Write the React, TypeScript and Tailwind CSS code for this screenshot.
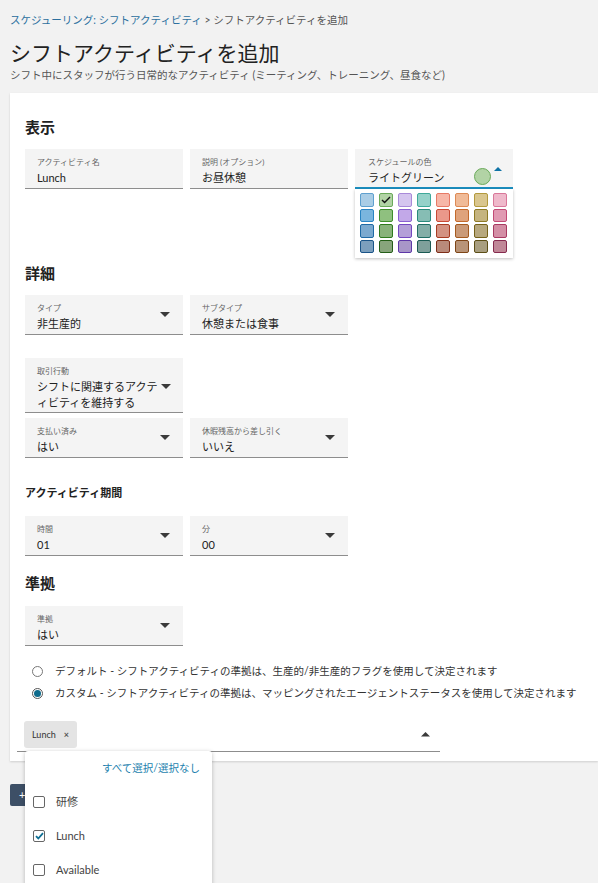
import React from 'react'

const swatches = [
  [
    ['#aacde6', '#5fa0cf'], ['#b2d3a5', '#6aaa5a'], ['#d5c5ef', '#a98ad9'], ['#95d2c9', '#3fa99a'],
    ['#f7b7a8', '#e87a66'], ['#f0bb98', '#dd8a55'], ['#d9c68e', '#b39a3e'], ['#efb9cb', '#d9789a'],
  ],
  [
    ['#7ab5de', '#2a84c3'], ['#8fc07f', '#3e8e2a'], ['#c2a8e8', '#8a5fd0'], ['#86bdb4', '#2a8a7c'],
    ['#ea988a', '#c84a35'], ['#dfa37c', '#c36a2c'], ['#c5b47f', '#8e7a25'], ['#e09ab2', '#c24b76'],
  ],
  [
    ['#7ba9cf', '#1f6aa5'], ['#88b27a', '#2e7a1e'], ['#b49fd8', '#7448c0'], ['#83aea7', '#206e65'],
    ['#d39282', '#a83b22'], ['#ca9a78', '#a55a1f'], ['#b7a87e', '#76621a'], ['#d38ea5', '#a83a62'],
  ],
  [
    ['#7c9fbd', '#1a5488'], ['#88a57c', '#245e18'], ['#a896c8', '#5e38a8'], ['#7fa09b', '#1a5a53'],
    ['#b98a7b', '#7e2e18'], ['#b89478', '#7e4516'], ['#a89e80', '#5c4e16'], ['#c08898', '#862b4f'],
  ],
]

function CaretDown() {
  return (
    <svg width="10" height="5" viewBox="0 0 10 5">
      <path d="M0 0h10L5 5z" fill="#3a3a3a" />
    </svg>
  )
}

function CaretUp({ color = '#3a3a3a', w = 9 }: { color?: string; w?: number }) {
  return (
    <svg width={w} height={w / 2} viewBox="0 0 10 5">
      <path d="M0 5h10L5 0z" fill={color} />
    </svg>
  )
}

function Field({
  label,
  value,
  caret = false,
  tall = false,
}: {
  label: string
  value: React.ReactNode
  caret?: boolean
  tall?: boolean
}) {
  return (
    <div
      className={`flex w-[158px] ${tall ? 'h-[55px] items-start' : 'h-[40px] items-center'} bg-[#f4f4f4] border-b border-[#8d8d8d] pl-[12px] pr-[13px]`}
    >
      <div className={`flex-1 self-start ${tall ? 'pt-[8px]' : 'pt-[8px]'}`}>
        <div className="text-[8px] leading-[10px] text-[#666]">{label}</div>
        <div className={`mt-[3px] text-[11px] leading-[16px] text-[#222] ${tall ? 'w-[124px]' : ''}`}>{value}</div>
      </div>
      {caret && (
        <div className={tall ? 'mt-[26px]' : ''}>
          <CaretDown />
        </div>
      )}
    </div>
  )
}

function ColorField() {
  return (
    <div className="relative">
      <div className="flex w-[158px] h-[40px] bg-[#f4f4f4] border-b-2 border-[#1c8fc0] pl-[13px]">
        <div className="flex-1 pt-[8px]">
          <div className="text-[8px] leading-[10px] text-[#666]">スケジュールの色</div>
          <div className="mt-[3px] text-[11px] leading-[16px] text-[#222]">ライトグリーン</div>
        </div>
        <div className="mt-[19px] w-[17px] h-[17px] rounded-full bg-[#b2d3a5] border border-[#6aaa5a]" />
        <div className="mt-[18px] ml-[3px] mr-[11px]">
          <CaretUp color="#0f73a6" w={8} />
        </div>
      </div>
      <div className="absolute left-0 top-full z-10 w-[158px] bg-white pt-[4px] pb-[5px] pl-[5px] shadow-[0_1px_3px_rgba(0,0,0,0.25)]">
        <div className="grid grid-cols-[repeat(8,14px)] gap-x-[5px] gap-y-[2px]">
          {swatches.flat().map(([fill, border], i) => (
            <div
              key={i}
              className="w-[14px] h-[13.5px] rounded-[2px] border-[1.5px] flex items-center justify-center"
              style={{ backgroundColor: fill, borderColor: border }}
            >
              {i === 1 && (
                <svg width="10" height="8" viewBox="0 0 10 8">
                  <path d="M1 4l2.6 2.6L9 1" stroke="#111" strokeWidth="1.4" fill="none" />
                </svg>
              )}
            </div>
          ))}
        </div>
      </div>
    </div>
  )
}

function Radio({ checked, children }: { checked?: boolean; children: React.ReactNode }) {
  return (
    <div className="flex items-center ml-[7px] h-[16px]">
      <div
        className={`w-[11px] h-[11px] rounded-full border ${checked ? 'border-[#555]' : 'border-[#777]'} bg-white flex items-center justify-center`}
      >
        {checked && <div className="w-[7px] h-[7px] rounded-full bg-[#0e6b8c]" />}
      </div>
      <span className="ml-[12px] text-[10.5px] leading-[16px] text-[#333]">{children}</span>
    </div>
  )
}

function Check({ checked }: { checked?: boolean }) {
  return (
    <div className="w-[12px] h-[12px] rounded-[2px] border border-[#666] bg-white flex items-center justify-center">
      {checked && (
        <svg width="9" height="8" viewBox="0 0 9 8">
          <path d="M1 4.2l2.3 2.3L8 1.2" stroke="#0f6f94" strokeWidth="1.8" fill="none" />
        </svg>
      )}
    </div>
  )
}

export default function App() {
  return (
    <div className="relative h-[883px] overflow-hidden bg-[#f2f2f2] pl-[10px] pt-[13px] font-[Lato,'Noto_Sans_CJK_JP',sans-serif]">
      <div className="text-[10.5px] leading-[14px]">
        <span className="text-[#2b6f9e]">スケジューリング: シフトアクティビティ</span>
        <span className="text-[#555]"> &gt; シフトアクティビティを追加</span>
      </div>
      <h1 className="mt-[12px] text-[21px] leading-[28px] text-[#222]">シフトアクティビティを追加</h1>
      <div className="text-[10.5px] leading-[16px] text-[#555]">
        シフト中にスタッフが行う日常的なアクティビティ (ミーティング、トレーニング、昼食など)
      </div>

      <div className="mt-[10px] bg-white pl-[15px] pt-[24px] pb-[9px] shadow-[0_1px_2px_rgba(0,0,0,0.15)]">
        <h2 className="text-[15px] leading-[20px] font-bold text-[#222]">表示</h2>
        <div className="mt-[12px] flex gap-[7px]">
          <Field label="アクティビティ名" value="Lunch" />
          <Field label="説明 (オプション)" value="お昼休憩" />
          <ColorField />
        </div>

        <h2 className="mt-[74px] text-[15px] leading-[20px] font-bold text-[#222]">詳細</h2>
        <div className="mt-[12px] flex gap-[7px]">
          <Field label="タイプ" value="非生産的" caret />
          <Field label="サブタイプ" value="休憩または食事" caret />
        </div>
        <div className="mt-[23px]">
          <Field label="取引行動" value="シフトに関連するアクティビティを維持する" caret tall />
        </div>
        <div className="mt-[5px] flex gap-[7px]">
          <Field label="支払い済み" value="はい" caret />
          <Field label="休暇残高から差し引く" value="いいえ" caret />
        </div>

        <h3 className="mt-[27px] text-[11px] leading-[16px] font-bold text-[#222]">アクティビティ期間</h3>
        <div className="mt-[15px] flex gap-[7px]">
          <Field label="時間" value="01" caret />
          <Field label="分" value="00" caret />
        </div>

        <h2 className="mt-[17px] text-[15px] leading-[20px] font-bold text-[#222]">準拠</h2>
        <div className="mt-[13px]">
          <Field label="準拠" value="はい" caret />
        </div>

        <div className="mt-[17px]">
          <Radio>デフォルト - シフトアクティビティの準拠は、生産的/非生産的フラグを使用して決定されます</Radio>
        </div>
        <div className="mt-[6px]">
          <Radio checked>カスタム - シフトアクティビティの準拠は、マッピングされたエージェントステータスを使用して決定されます</Radio>
        </div>

        <div className="relative mt-[17px] -ml-[8px] w-[423px] h-[34px] border-b border-[#8d8d8d] flex items-center pl-[7px] pr-[10px]">
          <div className="h-[27px] px-[8px] rounded-[3px] bg-[#e4e4e4] flex items-center gap-[8px] text-[9px] text-[#333]">
            <span>Lunch</span>
            <span className="font-bold text-[#555]">×</span>
          </div>
          <div className="flex-1" />
          <CaretUp />

          <div className="absolute left-[8px] top-full z-20 w-[187px] h-[150px] bg-white rounded-[3px] shadow-[0_1px_4px_rgba(0,0,0,0.25)]">
            <div className="pt-[10px] pr-[12px] text-right text-[10.5px] leading-[14px] text-[#1d7fae]">
              すべて選択/選択なし
            </div>
            <div className="mt-[10px] pl-[8px]">
              {[
                ['研修', false],
                ['Lunch', true],
                ['Available', false],
              ].map(([name, on]) => (
                <div key={name as string} className="h-[34px] flex items-center">
                  <Check checked={on as boolean} />
                  <span className="ml-[11px] text-[11px] text-[#444]">{name as string}</span>
                </div>
              ))}
            </div>
          </div>
        </div>
      </div>

      <div className="mt-[23px] w-[60px] h-[22px] rounded-[2px] bg-[#3d4f66] text-white text-[11px] leading-[22px] pl-[9px]">
        + 追加
      </div>
    </div>
  )
}
